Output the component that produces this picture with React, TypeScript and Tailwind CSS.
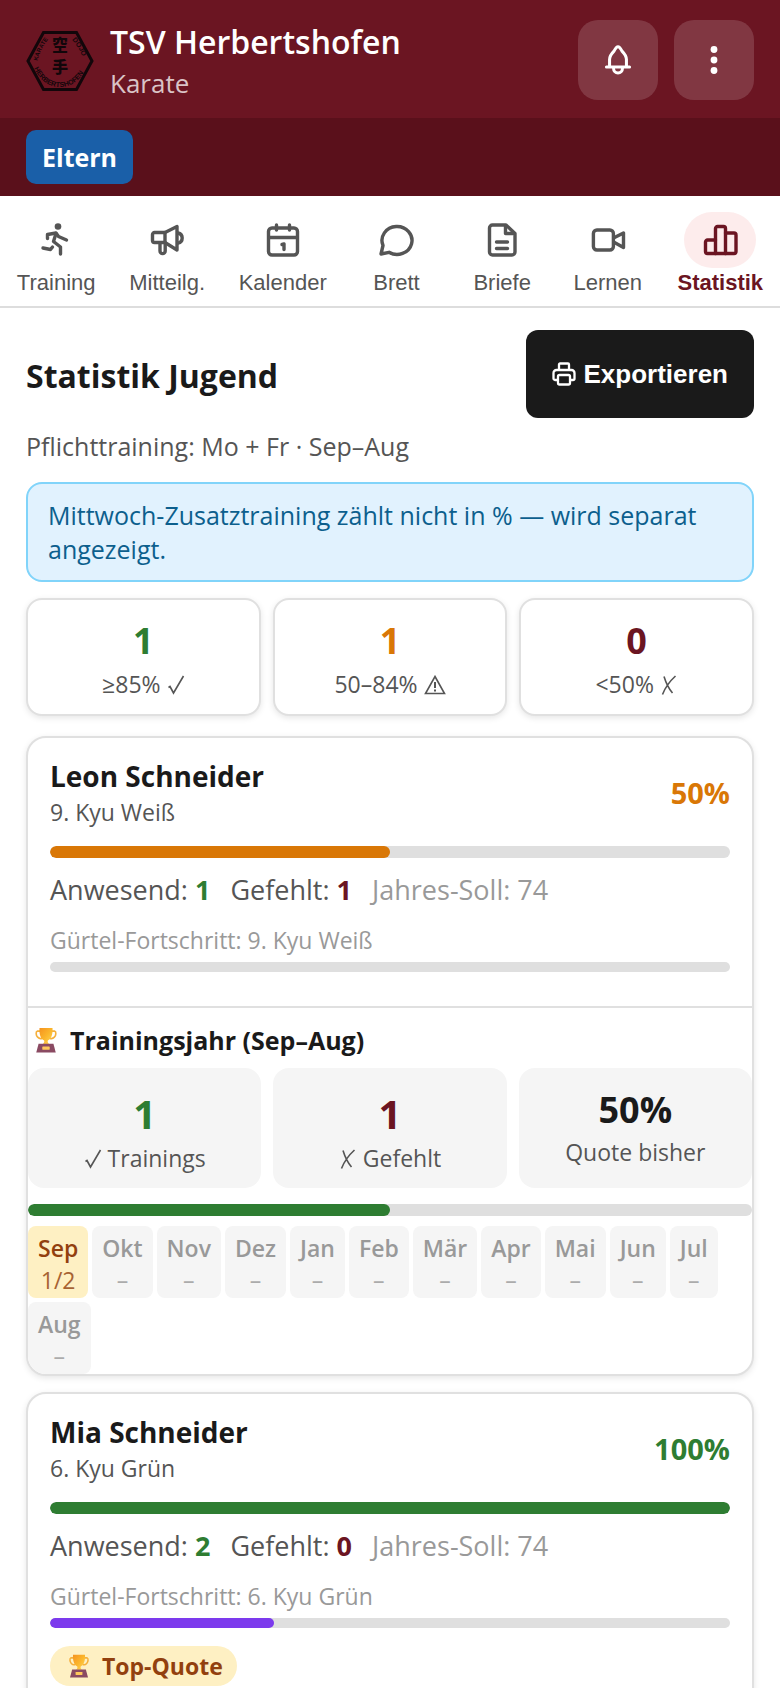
import type { ReactNode } from 'react';

const navItems = [
  { label: 'Training', icon: RunIcon },
  { label: 'Mitteilg.', icon: MegaphoneIcon },
  { label: 'Kalender', icon: CalendarIcon },
  { label: 'Brett', icon: ChatIcon },
  { label: 'Briefe', icon: LetterIcon },
  { label: 'Lernen', icon: VideoIcon },
  { label: 'Statistik', icon: ChartIcon, active: true },
];

const months = ['Okt', 'Nov', 'Dez', 'Jan', 'Feb', 'Mär', 'Apr', 'Mai', 'Jun', 'Jul', 'Aug'];

function Svg({ children, className = 'size-9' }: { children: ReactNode; className?: string }) {
  return (
    <svg
      viewBox="0 0 36 36"
      className={className}
      fill="none"
      stroke="currentColor"
      strokeWidth="3.4"
      strokeLinecap="round"
      strokeLinejoin="round"
      aria-hidden="true"
    >
      {children}
    </svg>
  );
}

function RunIcon() {
  return (
    <Svg>
      <circle cx="20" cy="4.5" r="3.3" fill="currentColor" stroke="none" />
      <path d="M9.5 16.5V12.5L18 11L20.5 14.5L28.5 18" />
      <path d="M18 11.5L15.5 19.5L22.5 25V32" />
      <path d="M5 26L12.5 27.5L14.5 25" />
    </Svg>
  );
}

function MegaphoneIcon() {
  return (
    <Svg>
      <path d="M16 10.5H5.5a2 2 0 0 0-2 2v6a2 2 0 0 0 2 2H16z" />
      <path d="M16 10.5L28 4.5V28L16 20.5" />
      <path d="M29 11a5.2 5.2 0 0 1 0 10.2" />
      <path d="M11 21v8a2.6 2.6 0 0 0 5.2 0v-8" />
    </Svg>
  );
}

function CalendarIcon() {
  return (
    <Svg>
      <rect x="3.5" y="6" width="29" height="27" rx="3.5" />
      <path d="M4 15.500H32M11.500 3V8M24.500 3V8" />
      <path d="M17 22.500L19 22V27.500" />
    </Svg>
  );
}

function ChatIcon() {
  return (
    <Svg>
      <path d="M3 32L5 23.500A15 14 0 1 1 11 30.300Z" />
    </Svg>
  );
}

function LetterIcon() {
  return (
    <Svg>
      <path d="M8.500 3H22L31 11.500V30a3 3 0 0 1-3 3H8.500a3 3 0 0 1-3-3V6a3 3 0 0 1 3-3Z" />
      <path d="M21.500 4V11.500H29M12.500 20H23.500M12.500 26.500H23.500" />
    </Svg>
  );
}

function VideoIcon() {
  return (
    <Svg>
      <rect x="3.4" y="8" width="20" height="20" rx="3.5" />
      <path d="M24.5 15.5L33.5 11V25.5L24.5 20.5" />
    </Svg>
  );
}

function ChartIcon() {
  return (
    <Svg>
      <path d="M13.500 18H5.500a2 2 0 0 0-2 2V29.500a2 2 0 0 0 2 2H32a2 2 0 0 0 2-2V13a2 2 0 0 0-2-2H23.500" />
      <path d="M13.500 31.500V6.500a2 2 0 0 1 2-2H21.500a2 2 0 0 1 2 2V31.500" />
    </Svg>
  );
}

function BellIcon() {
  return (
    <Svg className="size-8">
      <path d="M5 26H31M8.500 26V17.500C8.500 13 11 10.500 13.500 8C15 5 16 3 18 3C20 3 21 5 22.500 8C25 10.500 27.500 13 27.500 17.500V26" />
      <path d="M13 27.500a5 5 0 0 0 10 0" />
    </Svg>
  );
}

function PrinterIcon() {
  return (
    <svg viewBox="0 0 24 24" className="size-6" fill="none" stroke="currentColor" strokeWidth="2.3" strokeLinejoin="round" aria-hidden="true">
      <path d="M7 8V2.500a1 1 0 0 1 1-1h8a1 1 0 0 1 1 1V8" />
      <path d="M6 18H3a1.500 1.500 0 0 1-1.500-1.500V11a3 3 0 0 1 3-3h15a3 3 0 0 1 3 3v5.500A1.500 1.500 0 0 1 21 18h-3" />
      <rect x="6" y="13" width="12" height="9.5" rx="1.5" />
    </svg>
  );
}

function Check() {
  return (
    <svg viewBox="0 0 18 20" className="inline h-5 w-[18px] align-[-2px]" fill="none" stroke="currentColor" strokeWidth="1.6" role="img" aria-label="✓">
      <path d="M1.500 12.500L3 11.500L6.500 18L16.500 1" />
    </svg>
  );
}

function Cross() {
  return (
    <svg viewBox="0 0 18 20" className="inline h-5 w-[18px] align-[-2px]" fill="none" stroke="currentColor" strokeWidth="1.6" role="img" aria-label="✗">
      <path d="M4 1.500C6 8 9 14 12.500 18M15.500 1C10 6 5 13 2.500 19.500" />
    </svg>
  );
}

function Warning() {
  return (
    <svg viewBox="0 0 22 20" className="inline h-5 w-[22px] align-[-2px]" fill="none" stroke="currentColor" strokeWidth="1.6" role="img" aria-label="⚠">
      <path d="M11 1.500L20.500 18.500H1.500Z" />
      <path d="M11 7V13M11 14.500V16.500" strokeWidth="2" />
    </svg>
  );
}

function Trophy({ className }: { className: string }) {
  return (
    <svg viewBox="0 0 24 28" className={className} aria-hidden="true">
      <defs>
        <linearGradient id="cup" x1="0" y1="0" x2="1" y2="1">
          <stop offset="0" stopColor="#f5921f" />
          <stop offset="0.5" stopColor="#fbb52b" />
          <stop offset="1" stopColor="#ffd85a" />
        </linearGradient>
      </defs>
      <path d="M6 4.500H2.500C1 5 1 9 3 11C4.500 12.500 7 12.500 8 12M18 4.500H21.500C23 5 23 9 21 11C19.500 12.500 17 12.500 16 12" fill="none" stroke="#f5b03c" strokeWidth="1.8" />
      <path d="M5 1H19C19.500 8 17.500 13 14 14.500C13.500 16 14 17 15.500 18.500H8.500C10 17 10.500 16 10 14.500C6.500 13 4.500 8 5 1Z" fill="url(#cup)" />
      <path d="M4 18H20L22.500 27.500H1.500Z" fill="#8a4a62" />
      <rect x="8" y="21" width="8" height="3.5" rx="0.5" fill="#ffc85c" />
    </svg>
  );
}

function Logo() {
  return (
    <svg viewBox="0 0 68 60" className="h-[60px] w-[68px]" role="img" aria-label="Karate Dojo Herbertshofen">
      <path d="M2 30L17.500 1.500H50.500L66 30L50.500 58.500H17.500Z" fill="none" stroke="#12060a" strokeWidth="3" />
      <defs>
        <path id="logo-left" d="M11.500 30Q14 18 24 6" />
        <path id="logo-right" d="M46 9Q54 17 58 31" />
        <path id="logo-bottom" d="M8 37Q17 56 34 56Q51 56 61 36" />
      </defs>
      <g fill="#12060a" fontFamily="Liberation Sans, sans-serif" fontWeight="700" fontSize="7">
        <text fontSize="6"><textPath href="#logo-left">KARATE</textPath></text>
        <text><textPath href="#logo-right">DOJO</textPath></text>
        <text><textPath href="#logo-bottom">HERBERTSHOFEN</textPath></text>
      </g>
      <text fill="#12060a" fontFamily="Noto Sans CJK JP, sans-serif" fontWeight="900" fontSize="16" textAnchor="middle">
        <tspan x="34" y="20">空</tspan>
        <tspan x="34" y="42">手</tspan>
      </text>
    </svg>
  );
}

function Bar({ value, color, height = 'h-3' }: { value: number; color: string; height?: string }) {
  return (
    <div className={`${height} overflow-hidden rounded-full bg-[#dfdfdf]`}>
      <div className={`h-full rounded-full ${color}`} style={{ width: `${value}%` }} />
    </div>
  );
}

function SummaryCard({ value, color, children }: { value: number; color: string; children: ReactNode }) {
  return (
    <div className="rounded-2xl border-2 border-[#e0e0e0] bg-white px-2 pt-[18px] pb-[14px] text-center shadow-[0_2px_6px_rgba(0,0,0,0.1)]">
      <div className={`mb-1 text-[36px] leading-[46px] font-bold ${color}`}>{value}</div>
      <div className="text-[23px] leading-8 text-[#555555]">{children}</div>
    </div>
  );
}

type MemberProps = {
  name: string;
  belt: string;
  quote: number;
  present: number;
  missed: number;
  beltProgress: number;
  textColor: string;
  barColor: string;
  children?: ReactNode;
};

function MemberCard({ name, belt, quote, present, missed, beltProgress, textColor, barColor, children }: MemberProps) {
  return (
    <section className="mb-4 overflow-hidden rounded-[20px] border-2 border-[#e0e0e0] bg-white shadow-[0_2px_6px_rgba(0,0,0,0.1)]">
      <div className="px-[22px] pt-5">
        <div className="mb-[18px] flex items-center justify-between">
          <div>
            <h2 className="mb-0.5 text-[28px] leading-9 font-bold text-[#1a1a1a]">{name}</h2>
            <p className="text-[23px] leading-8 text-[#555555]">{belt}</p>
          </div>
          <div className={`text-[29px] leading-9 font-bold ${textColor}`}>{quote}%</div>
        </div>
        <Bar value={quote} color={barColor} />
        <div className="mt-[14px] flex gap-5 text-[27px] leading-9 text-[#555555]">
          <span>Anwesend: <b className="text-[#2e7d32]">{present}</b></span>
          <span>Gefehlt: <b className="text-[#6b1522]">{missed}</b></span>
          <span className="text-[#999999]">Jahres-Soll: 74</span>
        </div>
        <p className="mt-4 mb-1.5 text-[23px] leading-8 text-[#999999]">Gürtel-Fortschritt: {belt}</p>
        <Bar value={beltProgress} color="bg-[#7c3aed]" height="h-[10px]" />
      </div>
      {children}
    </section>
  );
}

export default function App() {
  return (
    <div className="min-h-screen bg-white font-['Open_Sans','Noto_Sans',sans-serif] text-[#1a1a1a]">
      <header>
        <div className="flex items-start gap-4 bg-[#6b1522] px-[26px] pt-5 pb-4 text-white">
          <div className="self-center">
            <Logo />
          </div>
          <div className="flex-1">
            <h1 className="text-[32px] leading-[44px] font-semibold">TSV Herbertshofen</h1>
            <p className="text-[26px] leading-[38px] text-white/75">Karate</p>
          </div>
          <button type="button" aria-label="Benachrichtigungen" className="flex size-20 items-center justify-center rounded-[20px] bg-white/15">
            <BellIcon />
          </button>
          <button type="button" aria-label="Menü" className="flex size-20 items-center justify-center rounded-[20px] bg-white/15">
            <svg viewBox="0 0 8 28" className="h-7 w-2" fill="currentColor" aria-hidden="true">
              <circle cx="4" cy="3.5" r="3.4" />
              <circle cx="4" cy="14" r="3.4" />
              <circle cx="4" cy="24.5" r="3.4" />
            </svg>
          </button>
        </div>
        <div className="flex bg-[#5a101b] px-[26px] py-3">
          <button type="button" className="h-[54px] rounded-[10px] bg-[#1a5fa8] px-4 text-[25px] leading-9 font-bold text-white">
            Eltern
          </button>
        </div>
      </header>

      <nav className="flex border-b-2 border-[#dddddd] pt-4 pb-2 font-['Liberation_Sans',Arial,sans-serif]">
        {navItems.map(({ label, icon: Icon, active }) => (
          <button
            key={label}
            type="button"
            className={`flex flex-auto flex-col items-center text-[22px] leading-[30px] ${active ? 'font-bold text-[#6b1522]' : 'text-[#555555]'}`}
          >
            <span className={`flex h-14 w-18 items-center justify-center rounded-full ${active ? 'bg-[#fdecec]' : ''}`}>
              <Icon />
            </span>
            {label}
          </button>
        ))}
      </nav>

      <main className="px-[26px] pt-[22px]">
        <div className="flex items-center justify-between">
          <h2 className="pt-1 text-[32px] leading-[42px] font-bold">Statistik Jugend</h2>
          <button type="button" className="flex h-[88px] items-center gap-2 rounded-xl bg-[#1a1a1a] px-[26px] font-['Liberation_Sans',Arial,sans-serif] text-[26px] font-bold text-white">
            <PrinterIcon />
            Exportieren
          </button>
        </div>
        <p className="mt-[10px] text-[25px] leading-9 text-[#555555]">Pflichttraining: Mo + Fr · Sep–Aug</p>
        <p className="mt-[18px] rounded-2xl border-2 border-[#81d4fa] bg-[#e1f2fe] px-5 py-[14px] text-[25px] leading-[34px] text-[#0c5f8d]">
          Mittwoch-Zusatztraining zählt nicht in % — wird separat angezeigt.
        </p>

        <div className="mt-4 mb-5 grid grid-cols-3 gap-3">
          <SummaryCard value={1} color="text-[#2e7d32]">≥85% <Check /></SummaryCard>
          <SummaryCard value={1} color="text-[#d97706]">50–84% <Warning /></SummaryCard>
          <SummaryCard value={0} color="text-[#6b1522]">&lt;50% <Cross /></SummaryCard>
        </div>

        <MemberCard name="Leon Schneider" belt="9. Kyu Weiß" quote={50} present={1} missed={1} beltProgress={0} textColor="text-[#d97706]" barColor="bg-[#d97706]">
          <div className="mt-[34px] border-t-2 border-[#e0e0e0] pt-[14px]">
            <h3 className="mb-[10px] flex items-center gap-3 pl-1.5 text-[25px] leading-9 font-bold">
              <Trophy className="h-[26px] w-6" />
              Trainingsjahr (Sep–Aug)
            </h3>
            <div className="mb-4 grid grid-cols-3 gap-3 text-center text-[23px] leading-8 text-[#555555]">
              <div className="h-[120px] rounded-2xl bg-[#f5f5f5] pt-[18px]">
                <div className="text-[40px] leading-[56px] font-bold text-[#2e7d32]">1</div>
                <Check /> Trainings
              </div>
              <div className="h-[120px] rounded-2xl bg-[#f5f5f5] pt-[18px]">
                <div className="text-[40px] leading-[56px] font-bold text-[#6b1522]">1</div>
                <Cross /> Gefehlt
              </div>
              <div className="h-[120px] rounded-2xl bg-[#f5f5f5] pt-4">
                <div className="text-[36px] leading-[52px] font-bold text-[#1a1a1a]">50%</div>
                Quote bisher
              </div>
            </div>
            <Bar value={50} color="bg-[#2e7d32]" />
            <div className="mt-[10px] flex flex-wrap gap-1 text-center text-[23px] leading-8">
              <div className="rounded-lg bg-[#fef0c3] px-[10px] pt-[6px] pb-[2px] text-[#92400e]">
                <div className="font-semibold">Sep</div>
                <div className="opacity-80">1/2</div>
              </div>
              {months.map((month) => (
                <div key={month} className="rounded-lg bg-[#f5f5f5] px-[10px] pt-[6px] pb-[2px] text-[#999999]">
                  <div className="font-semibold">{month}</div>
                  <div className="opacity-80">–</div>
                </div>
              ))}
            </div>
          </div>
        </MemberCard>

        <MemberCard name="Mia Schneider" belt="6. Kyu Grün" quote={100} present={2} missed={0} beltProgress={33} textColor="text-[#2e7d32]" barColor="bg-[#2e7d32]">
          <div className="px-[22px] pt-[18px] pb-[34px]">
            <span className="inline-flex h-10 items-center gap-3 rounded-full bg-[#fef0c3] pr-3.5 pl-[18px] text-[23px] font-bold text-[#92400e]">
              <Trophy className="h-6 w-[22px]" />
              Top-Quote
            </span>
          </div>
        </MemberCard>
      </main>
    </div>
  );
}
